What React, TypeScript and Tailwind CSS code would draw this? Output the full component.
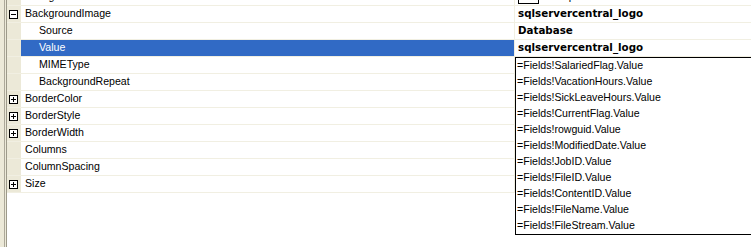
import React from "react";

type Row = {
  name: string;
  value?: string;
  indent?: boolean;
  expander?: "plus" | "minus";
  selected?: boolean;
  swatch?: boolean;
};

const rows: Row[] = [
  { name: "BackgroundColor", value: "Transparent", swatch: true },
  { name: "BackgroundImage", value: "sqlservercentral_logo", expander: "minus" },
  { name: "Source", value: "Database", indent: true },
  { name: "Value", value: "sqlservercentral_logo", indent: true, selected: true },
  { name: "MIMEType", indent: true },
  { name: "BackgroundRepeat", indent: true },
  { name: "BorderColor", expander: "plus" },
  { name: "BorderStyle", expander: "plus" },
  { name: "BorderWidth", expander: "plus" },
  { name: "Columns" },
  { name: "ColumnSpacing" },
  { name: "Size", expander: "plus" },
];

const fields = [
  "SalariedFlag",
  "VacationHours",
  "SickLeaveHours",
  "CurrentFlag",
  "rowguid",
  "ModifiedDate",
  "JobID",
  "FileID",
  "ContentID",
  "FileName",
  "FileStream",
];

function Expander({ kind }: { kind: "plus" | "minus" }) {
  return (
    <svg width="9" height="9" viewBox="0 0 9 9" className="block">
      <rect x="0.5" y="0.5" width="8" height="8" fill="white" stroke="#000" />
      <line x1="2" y1="4.5" x2="7" y2="4.5" stroke="#000" />
      {kind === "plus" && <line x1="4.5" y1="2" x2="4.5" y2="7" stroke="#000" />}
    </svg>
  );
}

function PropRow({ row }: { row: Row }) {
  const bold = row.value && !row.swatch;
  return (
    <div className="flex h-[17px] border-b border-[#f1efe2] shrink-0">
      <div className="w-[14px] bg-[#ece9d8] flex items-center pl-[2px] shrink-0">
        {row.expander && <Expander kind={row.expander} />}
      </div>
      <div
        className={`w-[493px] shrink-0 flex items-center whitespace-nowrap ${
          row.indent ? "pl-[18px]" : "pl-[4px]"
        } ${row.selected ? "bg-[#316ac5] text-white" : "text-black"}`}
      >
        {row.name}
      </div>
      <div className="w-px bg-[#f1efe2] shrink-0" />
      <div className="flex-1 flex items-center whitespace-nowrap pl-[3px]">
        {row.swatch ? (
          <>
            <span className="w-[21px] h-[13px] border border-black bg-white mr-[3px]" />
            <span>{row.value}</span>
          </>
        ) : (
          bold && (
            <span className="font-['DejaVu_Sans',sans-serif] font-bold text-[10.3px]">
              {row.value}
            </span>
          )
        )}
      </div>
    </div>
  );
}

export default function App() {
  return (
    <div className="relative w-[751px] h-[247px] overflow-hidden bg-white flex font-['Liberation_Sans',Arial,sans-serif] text-[10.6px] text-black">
      <div className="flex shrink-0">
        <div className="w-[4px] bg-[#ece9d8]" />
        <div className="w-px bg-[#aca899]" />
        <div className="w-px bg-[#ece9d8]" />
        <div className="w-px bg-[#9d9a8a]" />
      </div>
      <div className="flex-1 flex flex-col -mt-[11px]">
        {rows.map((r) => (
          <PropRow key={r.name} row={r} />
        ))}
      </div>

      <div className="absolute left-[515px] top-[57px] w-[260px] bg-white border border-black flex flex-col">
        {fields.map((f) => (
          <div key={f} className="h-[16px] flex items-center pl-[1px] whitespace-nowrap">
            =Fields!{f}.Value
          </div>
        ))}
      </div>
    </div>
  );
}
